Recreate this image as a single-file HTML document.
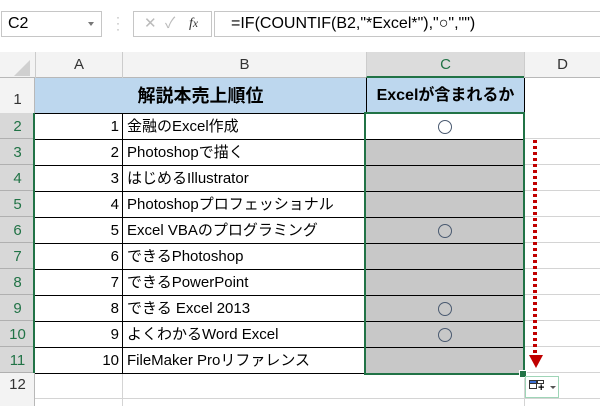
<!DOCTYPE html><html><head><meta charset="utf-8"><style>
*{box-sizing:border-box;margin:0;padding:0}
body{width:600px;height:406px;overflow:hidden;background:#fff;font-family:"Liberation Sans","Noto Sans CJK JP",sans-serif;position:relative}
.a{position:absolute}
.c{position:absolute;font-size:15px;line-height:26px;color:#000;white-space:nowrap}
.rh{position:absolute;left:0;width:35px;text-align:center;font-size:15px;color:#217346;background:#d8d8d8;border-bottom:1px solid #b0b0b0}
.o{position:absolute;left:438px;width:14px;height:14px;border:1.3px solid #4a5a70;border-radius:50%}
</style></head><body>
<div class="a" style="left:1px;top:11px;width:101px;height:26px;border:1px solid #c6c6c6;font-size:16px;line-height:24px;padding-left:6px">C2</div>
<div class="a" style="left:88px;top:22px;border-left:3px solid transparent;border-right:3px solid transparent;border-top:4px solid #777"></div>
<div class="a" style="left:116px;top:14px;color:#aaa;font-size:12px;line-height:6px">·<br>·<br>·</div>
<div class="a" style="left:133px;top:11px;width:79px;height:26px;border:1px solid #c6c6c6;font-size:15px;line-height:24px;color:#bbb"><span style="position:absolute;left:10px">✕</span><span style="position:absolute;left:31px">✓</span><span style="position:absolute;left:55px;color:#333;font-family:'Liberation Serif',serif;font-style:italic;font-size:14px">f<small>x</small></span></div>
<div class="a" style="left:214px;top:11px;width:390px;height:26px;border:1px solid #c6c6c6;font-size:16px;line-height:24px;padding-left:16px">=IF(COUNTIF(B2,"*Excel*"),"○","")</div>
<div class="a" style="left:0;top:52px;width:600px;height:26px;background:#f3f3f3;border-bottom:1px solid #b8b8b8"></div>
<div class="a" style="left:14px;top:60px;width:0;height:0;border-left:16px solid transparent;border-bottom:16px solid #d0d0d0"></div>
<div class="a" style="left:35px;top:52px;width:87px;height:26px;border-left:1px solid #ccc;text-align:center;font-size:15px;line-height:26px;color:#333">A</div>
<div class="a" style="left:122px;top:52px;width:244px;height:26px;border-left:1px solid #ccc;text-align:center;font-size:15px;line-height:26px;color:#333">B</div>
<div class="a" style="left:366px;top:52px;width:158px;height:26px;border-left:1px solid #ccc;background:#dcdcdc;text-align:center;font-size:15px;line-height:26px;color:#217346;border-bottom:2px solid #217346">C</div>
<div class="a" style="left:524px;top:52px;width:76px;height:26px;border-left:1px solid #ccc;text-align:center;font-size:15px;line-height:26px;color:#333">D</div>
<div class="a" style="left:0;top:78px;width:35px;height:328px;background:#f3f3f3;border-right:1px solid #b8b8b8"></div>
<div class="a" style="left:0;top:78px;width:35px;height:35px;text-align:center;font-size:15px;line-height:44px;color:#333">1</div>
<div class="a" style="left:0;top:373px;width:35px;height:26px;text-align:center;font-size:15px;line-height:24px;color:#333">12</div>
<div class="rh" style="top:113px;height:26px;line-height:28px">2</div>
<div class="rh" style="top:139px;height:26px;line-height:28px">3</div>
<div class="rh" style="top:165px;height:26px;line-height:28px">4</div>
<div class="rh" style="top:191px;height:26px;line-height:28px">5</div>
<div class="rh" style="top:217px;height:26px;line-height:28px">6</div>
<div class="rh" style="top:243px;height:26px;line-height:28px">7</div>
<div class="rh" style="top:269px;height:26px;line-height:28px">8</div>
<div class="rh" style="top:295px;height:26px;line-height:28px">9</div>
<div class="rh" style="top:321px;height:26px;line-height:28px">10</div>
<div class="rh" style="top:347px;height:26px;line-height:28px">11</div>
<div class="a" style="left:33px;top:113px;width:2px;height:260px;background:#217346"></div>
<div class="a" style="left:35px;top:398px;width:565px;height:1px;background:#d4d4d4"></div>
<div class="a" style="left:524px;top:78px;width:1px;height:328px;background:#d4d4d4"></div>
<div class="a" style="left:122px;top:373px;width:1px;height:33px;background:#d4d4d4"></div>
<div class="a" style="left:524px;top:113px;width:76px;height:261px;background:repeating-linear-gradient(to bottom,transparent 0,transparent 25px,#d4d4d4 25px,#d4d4d4 26px)"></div>
<div class="a" style="left:35px;top:78px;width:490px;height:36px;background:#bdd7ee;border-right:1px solid #000"></div>
<div class="a" style="left:366px;top:78px;width:1px;height:36px;background:#000"></div>
<div class="a" style="left:35px;top:78px;width:331px;height:36px;text-align:center;font-weight:bold;font-size:18px;line-height:36px">解説本売上順位</div>
<div class="a" style="left:367px;top:78px;width:157px;height:36px;text-align:center;font-weight:bold;font-size:16px;line-height:36px">Excelが含まれるか</div>
<div class="a" style="left:366px;top:139px;width:158px;height:234px;background:#c8c8c8"></div>
<div class="a" style="left:35px;top:113px;width:490px;height:261px;background:repeating-linear-gradient(to bottom,#000 0,#000 1px,transparent 1px,transparent 26px);"></div>
<div class="a" style="left:122px;top:113px;width:1px;height:261px;background:#000"></div>
<div class="a" style="left:35px;top:373px;width:490px;height:1px;background:#000"></div>
<div class="c" style="left:35px;top:114px;width:84px;text-align:right;line-height:26px">1<br>2<br>3<br>4<br>5<br>6<br>7<br>8<br>9<br>10</div>
<div class="c" style="left:127px;top:114px;line-height:26px">金融のExcel作成<br>Photoshopで描く<br>はじめるIllustrator<br>Photoshopプロフェッショナル<br>Excel VBAのプログラミング<br>できるPhotoshop<br>できるPowerPoint<br>できる Excel 2013<br>よくわかるWord Excel<br>FileMaker Proリファレンス</div>
<div class="o" style="top:120px"></div>
<div class="o" style="top:224px"></div>
<div class="o" style="top:302px"></div>
<div class="o" style="top:328px"></div>
<div class="a" style="left:364px;top:112px;width:161px;height:263px;border:2px solid #217346"></div>
<div class="a" style="left:520px;top:371px;width:6px;height:6px;background:#217346;outline:1px solid #fff"></div>
<div class="a" style="left:533px;top:140px;width:4px;height:215px;background:repeating-linear-gradient(to bottom,#c00000 0,#c00000 3px,transparent 3px,transparent 6px)"></div>
<div class="a" style="left:529px;top:355px;border-left:7px solid transparent;border-right:7px solid transparent;border-top:13px solid #c00000"></div>
<div class="a" style="left:525px;top:376px;width:34px;height:22px;border:1px solid #9fd5b7;background:#fff"></div>
<div class="a" style="left:529px;top:380px;width:8px;height:4px;background:#3b6fd4;border:1px solid #333"></div>
<div class="a" style="left:537px;top:380px;width:7px;height:4px;border:1px solid #333"></div>
<div class="a" style="left:529px;top:384px;width:8px;height:5px;border:1px solid #333;border-top:none"></div>
<div class="a" style="left:538px;top:382px;font-size:11px;line-height:12px;font-weight:bold">+</div>
<div class="a" style="left:550px;top:386px;border-left:3px solid transparent;border-right:3px solid transparent;border-top:3px solid #555"></div>
</body></html>
